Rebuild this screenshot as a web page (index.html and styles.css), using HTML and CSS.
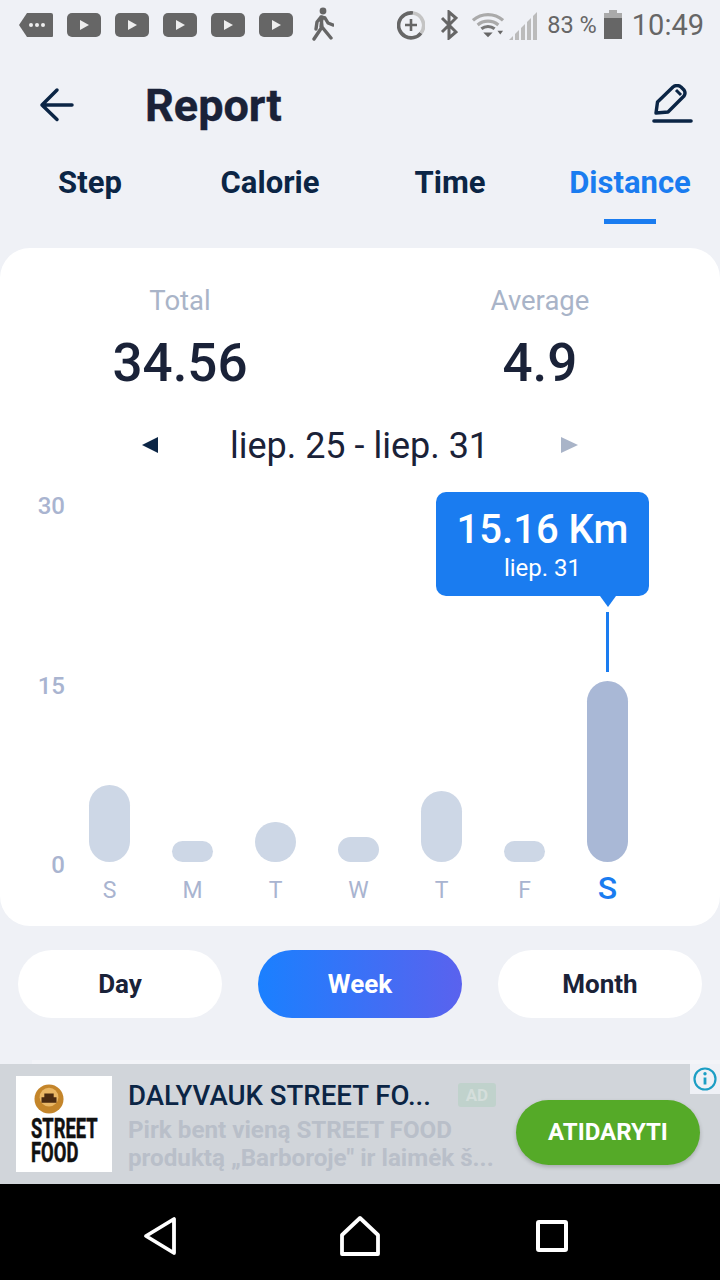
FILE: index.html
```html
<!DOCTYPE html>
<html lang="en">
  <head>
    <meta charset="UTF-8" />
    <meta name="viewport" content="width=device-width, initial-scale=1.0" />
    <title>Report</title>
    <link rel="stylesheet" href="styles.css">
  </head>
  <body>
    <div class="status">
      <div class="status-left">
        <svg width="34" height="26" viewBox="0 0 34 26"><path d="M8 1h24a2 2 0 0 1 2 2v21a1 1 0 0 1-1 1H8L0 13z" fill="#666"/><circle cx="12" cy="13" r="2" fill="#eee"/><circle cx="18" cy="13" r="2" fill="#eee"/><circle cx="24" cy="13" r="2" fill="#eee"/></svg>
        <svg class="yt" width="34" height="24" viewBox="0 0 34 24"><rect width="34" height="24" rx="5" fill="#666"/><path d="M13 7l9 5-9 5z" fill="#eee"/></svg>
        <svg class="yt" width="34" height="24" viewBox="0 0 34 24"><rect width="34" height="24" rx="5" fill="#666"/><path d="M13 7l9 5-9 5z" fill="#eee"/></svg>
        <svg class="yt" width="34" height="24" viewBox="0 0 34 24"><rect width="34" height="24" rx="5" fill="#666"/><path d="M13 7l9 5-9 5z" fill="#eee"/></svg>
        <svg class="yt" width="34" height="24" viewBox="0 0 34 24"><rect width="34" height="24" rx="5" fill="#666"/><path d="M13 7l9 5-9 5z" fill="#eee"/></svg>
        <svg class="yt" width="34" height="24" viewBox="0 0 34 24"><rect width="34" height="24" rx="5" fill="#666"/><path d="M13 7l9 5-9 5z" fill="#eee"/></svg>
        <svg class="walk" width="24" height="36" viewBox="0 0 24 36"><circle cx="13" cy="4" r="3.4" fill="#666"/><path d="M11 10l-4 5-1 7M11 10l4 1 3 5 5 2M11 10l1 10-8 12M12 20l9 11M12 10l-1 10" fill="none" stroke="#666" stroke-width="3.4" stroke-linecap="round" stroke-linejoin="round"/></svg>
      </div>
      <div class="status-right">
        <svg width="28" height="30" viewBox="0 0 28 30"><path d="M24 23a12.5 12.5 0 1 1-8-20" fill="none" stroke="#666" stroke-width="3.6"/><path d="M16 3a12.5 12.5 0 0 1 8 20" fill="none" stroke="#c4c4c4" stroke-width="3.6"/><path d="M14 9v12M8 15h12" stroke="#666" stroke-width="2.6"/></svg>
        <svg class="bt" width="18" height="30" viewBox="0 0 18 30"><path d="M2 8l14 14-7 6V2l7 6L2 22" fill="none" stroke="#666" stroke-width="3"/></svg>
        <svg class="wifi" width="32" height="28" viewBox="0 0 34 28"><path d="M1 9a24 24 0 0 1 32 0M6 14a17 17 0 0 1 22 0" fill="none" stroke="#aaa" stroke-width="3.4"/><path d="M10 18a11 11 0 0 1 14 0" fill="none" stroke="#777" stroke-width="3.2"/><path d="M12 22h10l-5 5z" fill="#666"/><path d="M27 20h6l-3 4z" fill="#666"/></svg>
        <svg class="signal" width="28" height="30" viewBox="0 0 28 30"><path d="M0 30l4-4v4zM6 24l4-4v10H6zM12 18l4-4v16h-4zM18 12l4-4v22h-4zM24 6l4-4v28h-4z" fill="#bbb"/></svg>
        <span class="pct">83 %</span>
        <svg class="batt" width="20" height="30" viewBox="0 0 20 30"><path d="M6 0h8v3H6z" fill="#aaa"/><path d="M1 3h18v5H1z" fill="#aaa"/><path d="M1 8h18v21H1z" fill="#666"/></svg>
        <span class="clock">10:49</span>
      </div>
    </div>

    <div class="header">
      <svg class="back" width="36" height="36" viewBox="0 0 36 36"><path d="M18 3L3 18l15 14.5M3 18h30" fill="none" stroke="#0b2545" stroke-width="3.5" stroke-linecap="round" stroke-linejoin="round"/></svg>
      <h1>Report</h1>
      <svg class="edit" width="42" height="42" viewBox="0 0 42 42"><path d="M5 29l1.5-11L22 3q4-3 8 0l3 3q2 3 0 6L17 28z" fill="none" stroke="#0b2545" stroke-width="3.4" stroke-linejoin="round"/><path d="M25 6l5 5" stroke="#0b2545" stroke-width="3"/><path d="M3 37h37" stroke="#0b2545" stroke-width="3.6" stroke-linecap="round"/></svg>
    </div>

    <div class="tabs">
      <div class="tab">Step</div>
      <div class="tab">Calorie</div>
      <div class="tab">Time</div>
      <div class="tab active">Distance</div>
    </div>

    <div class="card">
      <div class="totals">
        <div class="total">
          <div class="total-label">Total</div>
          <div class="total-value">34.56</div>
        </div>
        <div class="total">
          <div class="total-label">Average</div>
          <div class="total-value">4.9</div>
        </div>
      </div>
      <div class="dates">
        <span class="arrow arrow-prev"></span>
        <span class="date-text">liep. 25 - liep. 31</span>
        <span class="arrow arrow-next"></span>
      </div>
      <div class="chart">
        <div class="axis">
          <span>30</span>
          <span>15</span>
          <span>0</span>
        </div>
        <div class="days">
          <div class="day"><div class="bar-wrap"><div class="bar" style="height: 77px"></div></div><span>S</span></div>
          <div class="day"><div class="bar-wrap"><div class="bar" style="height: 21px"></div></div><span>M</span></div>
          <div class="day"><div class="bar-wrap"><div class="bar" style="height: 40px"></div></div><span>T</span></div>
          <div class="day"><div class="bar-wrap"><div class="bar" style="height: 25px"></div></div><span>W</span></div>
          <div class="day"><div class="bar-wrap"><div class="bar" style="height: 71px"></div></div><span>T</span></div>
          <div class="day"><div class="bar-wrap"><div class="bar" style="height: 21px"></div></div><span>F</span></div>
          <div class="day selected"><div class="bar-wrap"><div class="bar" style="height: 181px"></div></div><span>S</span></div>
        </div>
        <div class="tip">
          <div class="tip-value">15.16 Km</div>
          <div class="tip-date">liep. 31</div>
        </div>
        <div class="tip-line"></div>
      </div>
    </div>

    <div class="ranges">
      <button>Day</button>
      <button class="on">Week</button>
      <button>Month</button>
    </div>

    <div class="ad">
      <div class="ad-logo">
        <svg class="ad-badge" width="30" height="30" viewBox="0 0 32 32"><circle cx="16" cy="16" r="15.5" fill="#c4852a"/><circle cx="16" cy="14" r="10" fill="#eab765"/><path d="M8 20v-6h3v-4h10v4h3v6z" fill="#4a2a10"/></svg>
        <div class="ad-logo-text">STREET<br>FOOD</div>
      </div>
      <div class="ad-text">
        <div class="ad-title"><span>DALYVAUK STREET FO...</span><em>AD</em></div>
        <div class="ad-desc">Pirk bent vieną STREET FOOD<br>produktą „Barboroje" ir laimėk š...</div>
      </div>
      <div class="ad-btn">ATIDARYTI</div>
      <div class="ad-info">
        <svg width="24" height="24" viewBox="0 0 24 24"><circle cx="12" cy="12" r="10.5" fill="none" stroke="#1c9ec4" stroke-width="2.2"/><path d="M12 10.5v7" stroke="#1c9ec4" stroke-width="2.8"/><circle cx="12" cy="6.8" r="1.7" fill="#1c9ec4"/></svg>
      </div>
    </div>

    <div class="nav">
      <svg width="34" height="40" viewBox="0 0 34 40"><path d="M31 3v34L3 20z" fill="none" stroke="#fff" stroke-width="3.8" stroke-linejoin="round"/></svg>
      <svg width="42" height="40" viewBox="0 0 42 40"><path d="M3 19L21 2l18 17v19H3z" fill="none" stroke="#fff" stroke-width="3.8" stroke-linejoin="round"/></svg>
      <svg width="32" height="32" viewBox="0 0 32 32"><rect x="2" y="2" width="28" height="28" rx="1" fill="none" stroke="#fff" stroke-width="4"/></svg>
    </div>
  </body>
</html>
```

FILE: styles.css
```css
* {
  box-sizing: border-box;
}

body {
  margin: 0;
  width: 720px;
  height: 1280px;
  overflow: hidden;
  background-color: #eff1f6;
  font-family: Roboto, sans-serif;
}

.status {
  height: 48px;
  display: flex;
  justify-content: space-between;
  align-items: center;
  padding: 1px 16px 0 19px;
  color: #666;
}

.status-left,
.status-right {
  display: flex;
  align-items: center;
}

.yt {
  margin-left: 14px;
}

.walk {
  margin-left: 17px;
}

.bt {
  margin-left: 15px;
}

.wifi {
  margin-left: 14px;
}

.signal {
  margin-left: 5px;
}

.pct {
  font-size: 23.5px;
  margin-left: 10px;
}

.batt {
  margin-left: 6px;
}

.clock {
  font-size: 29px;
  margin-left: 9px;
}

.header {
  height: 64px;
  margin-top: 25px;
  display: flex;
  align-items: center;
  padding: 0 27px 0 39px;
}

.back {
  margin-right: 70px;
}

h1 {
  flex: 1;
  margin: 0;
  font-size: 45px;
  font-weight: 700;
  color: #1a2238;
  -webkit-text-stroke: 0.4px #1a2238;
}

.tabs {
  height: 76px;
  margin-top: 10px;
  display: grid;
  grid-template-columns: repeat(4, 180px);
}

.tab {
  text-align: center;
  padding-top: 17px;
  font-size: 31px;
  font-weight: 700;
  color: #0b2545;
}

.tab.active {
  color: #1a7cf0;
  position: relative;
}

.tab.active::after {
  content: "";
  position: absolute;
  left: 64px;
  bottom: -1px;
  width: 52px;
  height: 5px;
  background-color: #1a7cf0;
}

.card {
  height: 678px;
  margin-top: 25px;
  padding-top: 33px;
  background-color: #fff;
  border-radius: 30px;
}

.totals {
  display: grid;
  grid-template-columns: 360px 360px;
  text-align: center;
}

.total-label {
  font-size: 27.5px;
  line-height: 40px;
  color: #a9b4c8;
}

.total-value {
  font-size: 53px;
  line-height: 60px;
  margin-top: 12px;
  font-weight: 500;
  color: #1a2238;
}

.dates {
  height: 60px;
  margin-top: 22px;
  display: flex;
  align-items: center;
  padding-left: 142px;
}

.date-text {
  width: 403px;
  padding-top: 2px;
  text-align: center;
  font-size: 36px;
  color: #1a2238;
}

.arrow {
  width: 0;
  height: 0;
  border-top: 8px solid transparent;
  border-bottom: 8px solid transparent;
}

.arrow-prev {
  border-right: 16px solid #0b2545;
}

.arrow-next {
  border-left: 17px solid #a9b4c8;
}

.chart {
  position: relative;
  height: 412px;
  margin-top: 17px;
  display: flex;
}

.axis {
  width: 68px;
  height: 387px;
  padding-right: 3px;
  display: flex;
  flex-direction: column;
  justify-content: space-between;
  align-items: flex-end;
  font-size: 24px;
  line-height: 28px;
  font-weight: 500;
  color: #a9b4d0;
}

.days {
  display: grid;
  grid-template-columns: repeat(7, 83px);
}

.day {
  display: flex;
  flex-direction: column;
  align-items: center;
  height: 412px;
}

.bar-wrap {
  height: 370px;
  flex-shrink: 0;
  display: flex;
  align-items: flex-end;
}

.bar {
  width: 41px;
  border-radius: 21px;
  background-color: #cdd7e6;
}

.day span {
  margin-top: 15px;
  font-size: 23px;
  line-height: 28px;
  color: #a9b4d0;
}

.selected .bar {
  background-color: #a9b8d6;
}

.selected span {
  margin-top: 10px;
  font-size: 32px;
  line-height: 32px;
  font-weight: 500;
  color: #1a7cf0;
}

.tip {
  position: absolute;
  left: 436px;
  top: 0;
  width: 213px;
  height: 104px;
  padding-top: 15px;
  border-radius: 10px;
  background-color: #1a7cf0;
  color: #fff;
  text-align: center;
}

.tip::after {
  content: "";
  position: absolute;
  left: 164px;
  bottom: -11px;
  border-left: 8px solid transparent;
  border-right: 8px solid transparent;
  border-top: 11px solid #1a7cf0;
}

.tip-value {
  font-size: 40px;
  line-height: 45px;
  font-weight: 500;
}

.tip-date {
  font-size: 24px;
  line-height: 32px;
}

.tip-line {
  position: absolute;
  left: 606px;
  top: 120px;
  width: 3px;
  height: 60px;
  background-color: #1a7cf0;
}

.ranges {
  height: 68px;
  margin-top: 24px;
  padding: 0 18px;
  display: flex;
  justify-content: space-between;
}

.ranges button {
  width: 204px;
  border: none;
  border-radius: 34px;
  background-color: #fff;
  font-family: Roboto, sans-serif;
  font-size: 26px;
  font-weight: 700;
  color: #1a2238;
}

.ranges .on {
  background: linear-gradient(90deg, #1a80ff, #5a62ee);
  color: #fff;
}

.ad {
  position: relative;
  height: 120px;
  margin-top: 46px;
  padding: 12px 20px 12px 16px;
  display: flex;
  background-color: #d1d5da;
}

.ad::before {
  content: "";
  position: absolute;
  left: 32px;
  right: 0;
  top: -4px;
  height: 4px;
  background-color: #f3f4f8;
}

.ad-logo {
  width: 96px;
  height: 96px;
  padding: 8px 0 0 15px;
  background-color: #fff;
}

.ad-badge {
  display: block;
  margin-left: 3px;
}

.ad-logo-text {
  margin-top: 3px;
  font-size: 27px;
  line-height: 24px;
  font-weight: 700;
  color: #111;
  white-space: nowrap;
  transform: scaleX(0.68);
  transform-origin: left top;
  -webkit-text-stroke: 0.5px #111;
}

.ad-text {
  flex: 1;
  margin-left: 16px;
}

.ad-title {
  display: flex;
  align-items: center;
  height: 38px;
  font-size: 27.6px;
  font-weight: 500;
  color: #0b2545;
}

.ad-title em {
  margin-left: 27px;
  width: 38px;
  height: 24px;
  border-radius: 3px;
  background-color: #c0d2cc;
  color: #d4dedb;
  font-style: normal;
  font-size: 17px;
  line-height: 24px;
  font-weight: 700;
  text-align: center;
}

.ad-desc {
  margin-top: 2px;
  font-size: 24.2px;
  line-height: 28px;
  font-weight: 700;
  color: #b9bfc9;
}

.ad-btn {
  width: 184px;
  height: 65px;
  margin-top: 24px;
  border-radius: 33px;
  background-color: #55aa28;
  box-shadow: 0 2px 4px rgba(0, 0, 0, 0.2);
  color: #fff;
  font-size: 24px;
  font-weight: 700;
  line-height: 65px;
  text-align: center;
}

.ad-info {
  position: absolute;
  right: 0;
  top: 0;
  width: 30px;
  height: 30px;
  padding: 3px;
  background-color: #eff1f6;
}

.nav {
  height: 96px;
  padding: 8px 0 0 143px;
  background-color: #000;
  display: flex;
  align-items: center;
}

.nav svg:nth-child(2) {
  margin-left: 162px;
}

.nav svg:nth-child(3) {
  margin-left: 155px;
}
```
